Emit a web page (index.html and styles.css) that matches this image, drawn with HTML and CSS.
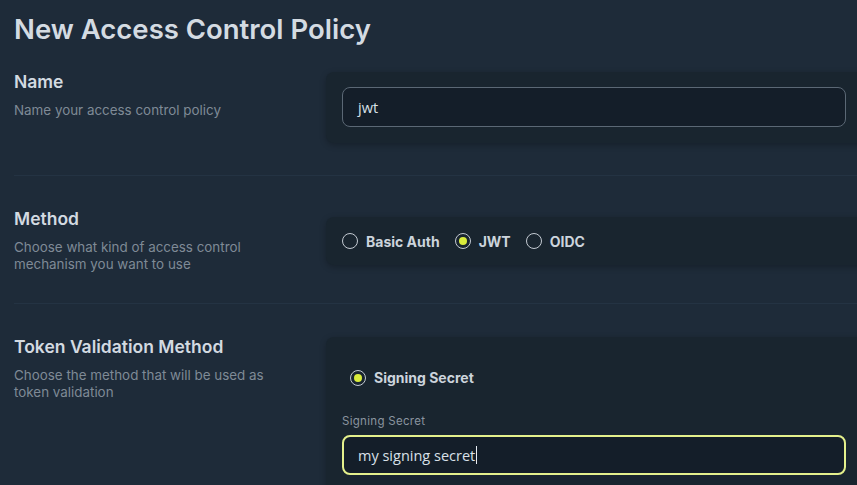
FILE: index.html
```html
<!DOCTYPE html>
<html>
<head>
<meta charset="utf-8">
<link rel="stylesheet" href="styles.css">
</head>
<body>
<div class="page">
  <h1 class="title">New Access Control Policy</h1>

  <section class="row">
    <div class="info">
      <h2 class="label">Name</h2>
      <p class="desc">Name your access control policy</p>
    </div>
    <div class="card card-name">
      <div class="input">jwt</div>
    </div>
  </section>

  <hr class="divider">

  <section class="row row-center">
    <div class="info">
      <h2 class="label">Method</h2>
      <p class="desc">Choose what kind of access control mechanism you want to use</p>
    </div>
    <div class="card card-radios">
      <label class="radio"><span class="dot"></span>Basic Auth</label>
      <label class="radio"><span class="dot on"></span>JWT</label>
      <label class="radio"><span class="dot"></span>OIDC</label>
    </div>
  </section>

  <hr class="divider">

  <section class="row">
    <div class="info">
      <h2 class="label">Token Validation Method</h2>
      <p class="desc">Choose the method that will be used as token validation</p>
    </div>
    <div class="card card-token">
      <label class="radio radio-secret"><span class="dot on"></span>Signing Secret</label>
      <div class="field-label">Signing Secret</div>
      <div class="input input-focus">my signing secret<span class="caret"></span></div>
    </div>
  </section>
</div>
</body>
</html>
```

FILE: styles.css
```css
* { box-sizing: border-box; }
html, body {
  margin: 0;
  padding: 0;
  background: #1e2b39;
  overflow: hidden;
  height: 485px;
}
body {
  font-family: "Inter", "Roboto", sans-serif;
  color: #d3dae1;
}
.page {
  width: 868px;
  padding: 11px 0 0 14px;
}
.title {
  margin: 0 0 25px 0;
  font-size: 27.5px;
  line-height: 36px;
  font-weight: 600;
  color: #d4dbe2;
  letter-spacing: 0;
}
.row {
  display: grid;
  grid-template-columns: 312px 1fr;
  align-items: start;
}
.row-center { align-items: center; }
.info { padding-right: 36px; }
.label {
  margin: 0;
  font-size: 17.5px;
  line-height: 20px;
  font-weight: 600;
  color: #d3dae1;
}
.desc {
  margin: 10px 0 0 0;
  font-size: 13.4px;
  line-height: 17px;
  color: #7f8a96;
  font-weight: 400;
}
.divider {
  border: 0;
  border-top: 1px solid #243343;
  margin: 30px 0 33px 0;
}
.card {
  background: #19252f;
  border-radius: 8px 0 0 8px;
  box-shadow: 0 2px 6px rgba(0,0,0,0.25);
}
.card-name {
  padding: 15px 16px 16px 16px;
  margin-bottom: 2px;
}
.input {
  height: 40px;
  width: 504px;
  border: 1px solid #5b6875;
  border-radius: 8px;
  background: #141e29;
  padding: 0 15px;
  display: flex;
  align-items: center;
  font-family: "Open Sans", "Noto Sans", sans-serif;
  font-size: 14.5px;
  color: #d8e0e8;
}
.input-focus {
  border: 2px solid #e4f08c;
  padding: 0 14px;
}
.caret {
  display: inline-block;
  width: 1px;
  height: 18px;
  background: #e8eef4;
  margin-left: 1px;
}
.card-radios {
  display: flex;
  align-items: center;
  gap: 15px;
  padding: 12px 16px;
  height: 48px;
}
.radio {
  display: flex;
  align-items: center;
  gap: 8px;
  font-size: 14px;
  font-weight: 700;
  color: #ccd4dc;
}
.dot {
  width: 16px;
  height: 16px;
  border-radius: 50%;
  border: 1.5px solid #c3cad2;
  display: flex;
  align-items: center;
  justify-content: center;
  flex: none;
}
.dot.on::after {
  content: "";
  width: 8px;
  height: 8px;
  border-radius: 50%;
  background: #d9ec3c;
}
.card-token {
  padding: 32px 16px 16px 16px;
  min-height: 160px;
}
.radio-secret { margin-left: 8px; gap: 8px; }
.field-label {
  margin-top: 28px;
  margin-bottom: 7px;
  font-size: 11.5px;
  line-height: 14px;
  color: #8a949f;
  letter-spacing: 0.3px;
}
```
